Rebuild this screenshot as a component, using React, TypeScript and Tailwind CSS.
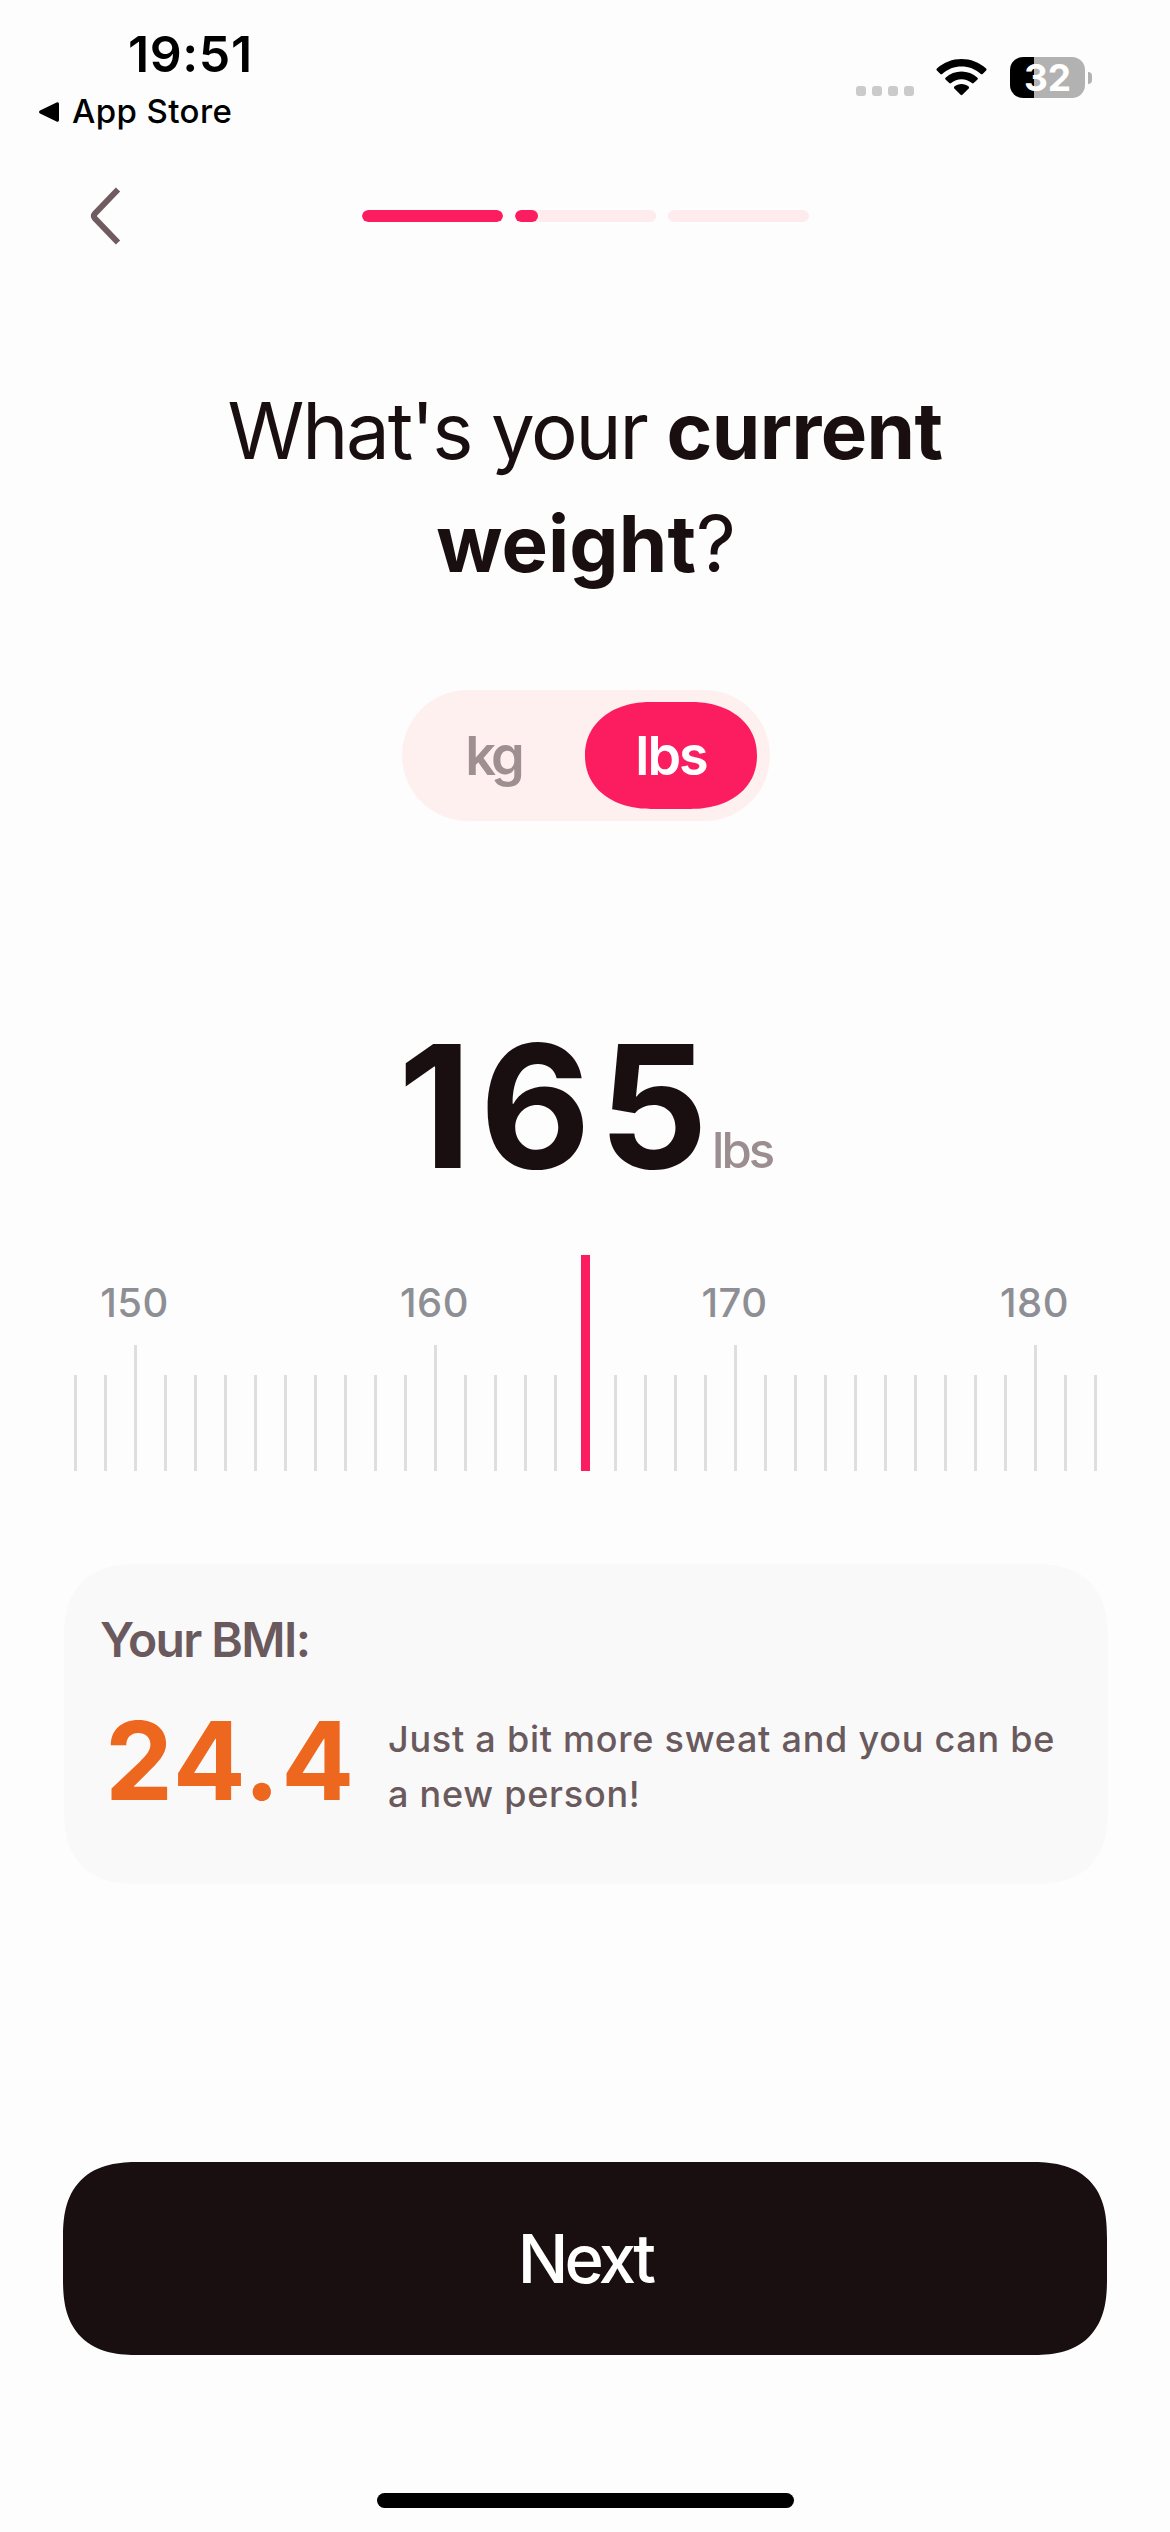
import { useState } from 'react'
import { clsx } from 'clsx'

const UNITS = ['kg', 'lbs'] as const
type Unit = (typeof UNITS)[number]

const RULER_START = 148
const RULER_END = 182
const RULER_VALUES = Array.from({ length: RULER_END - RULER_START + 1 }, (_, i) => RULER_START + i)

export default function App() {
  const [unit, setUnit] = useState<Unit>('lbs')
  const weight = 165

  return (
    <div className="flex h-[2532px] w-[1170px] flex-col overflow-hidden bg-[#fdfdfd] font-['Inter',sans-serif] text-[#190e10]">
      <StatusBar />
      <NavBar />

      <main className="flex flex-col">
        <h1 className="mt-[98px] text-center text-[78px] leading-[113px] font-normal tracking-[-2.2px]">
          What's your <b className="font-bold tracking-[-0.6px]">current</b>
          <br />
          <b className="font-bold tracking-[0.1px]">weight</b>?
        </h1>

        <UnitToggle value={unit} onChange={setUnit} />

        <div className="mt-[200px] ml-[398px] flex h-[170px] items-baseline">
          <span className="text-[171px] leading-[170px] font-bold tracking-[8px]">{weight}</span>
          <span className="ml-[-4px] text-[49px] font-medium tracking-[-3px] text-[#9b8d90]">{unit}</span>
        </div>

        <Ruler selected={weight} />
        <BmiCard bmi="24.4" message="Just a bit more sweat and you can be a new person!" />
      </main>

      <button
        type="button"
        className="mx-[63px] mt-[278px] h-[193px] rounded-[76px] bg-[#190e10] text-[67px] leading-[193px] font-medium tracking-[-3.8px] text-white [corner-shape:superellipse(1.35)]"
      >
        Next
      </button>

      <div className="mx-auto mt-[138px] h-[15px] w-[417px] rounded-full bg-black" />
    </div>
  )
}

function StatusBar() {
  return (
    <header className="flex h-[156px] justify-between text-black">
      <div className="pt-[24px] pl-[38px]">
        <div className="pl-[90px] text-[50px] leading-[60px] font-semibold tracking-[0.6px]">19:51</div>
        <div className="mt-[8px] flex h-[40px] items-center text-[33px] font-medium tracking-[0.4px]">
          <svg className="mr-[12px] h-[22px] w-[22px]" viewBox="0 0 22 22">
            <path d="M2 9.5 18.5 1.5Q21 .6 21 3v16q0 2.400-2.500 1.500L2 12.500Q0 11 2 9.500Z" />
          </svg>
          App Store
        </div>
      </div>

      <div className="flex pt-[57px] pr-[78px]">
        <div className="mt-[29px] flex gap-[6px]">
          {[0, 1, 2, 3].map((dot) => (
            <span key={dot} className="size-[10px] rounded-[3px] bg-[#cbcbcb]" />
          ))}
        </div>
        <svg className="mt-[1px] ml-[22px] h-[40px] w-[51px]" viewBox="0 0 51 40">
          <path d="M.9 10.600C14.500-2.200 36.500-2.200 50.100 10.600Q51 11.500 50.100 12.400L46.600 15.900Q45.700 16.700 44.800 15.900C34 6 17 6 6.200 15.900Q5.300 16.700 4.400 15.900L.9 12.400Q0 11.500.9 10.600Z" />
          <path d="M9.500 19.700C18.300 11.400 32.700 11.400 41.500 19.700Q42.300 20.600 41.500 21.400L37.700 25.100Q36.800 25.900 35.900 25.100C30 19.900 21 19.900 15.100 25.100Q14.200 25.900 13.300 25.100L9.500 21.400Q8.700 20.600 9.500 19.700Z" />
          <path d="M18.300 28.600C22.300 25 28.700 25 32.700 28.600Q33.500 29.500 32.700 30.400L26.400 36.800Q25.500 37.600 24.600 36.800L18.300 30.400Q17.500 29.500 18.300 28.600Z" />
        </svg>
        <div className="ml-[23px] flex h-[41px] w-[75px] items-center justify-center rounded-[13px] bg-[linear-gradient(90deg,#000_24px,#b2b2b2_24px)] text-[37px] font-bold text-white">
          32
        </div>
        <span className="mt-[15px] ml-[3px] h-[12px] w-[4px] rounded-r-full bg-[#b2b2b2]" />
      </div>
    </header>
  )
}

function NavBar() {
  return (
    <nav className="flex h-[120px] items-center">
      <button type="button" className="ml-[90px]">
        <svg className="h-[60px] w-[32px]" viewBox="0 0 32 60" fill="none" stroke="#6e5c60" strokeWidth="6">
          <path d="M28 3.500 5 27.500Q2.800 30 5 32.500L28 56.500" />
        </svg>
      </button>
      <div className="ml-[240px] flex gap-[12px]">
        <ProgressSegment fill={100} />
        <ProgressSegment fill={16.3} />
        <ProgressSegment fill={0} />
      </div>
    </nav>
  )
}

function ProgressSegment({ fill }: { fill: number }) {
  return (
    <div className="h-[12px] w-[141px] overflow-hidden rounded-full bg-[#feebee]">
      <div className="h-full rounded-full bg-[#fb1d60]" style={{ width: `${fill}%` }} />
    </div>
  )
}

function UnitToggle({ value, onChange }: { value: Unit; onChange: (unit: Unit) => void }) {
  return (
    <div className="mt-[90px] ml-[402px] flex h-[131px] w-[368px] items-center justify-between rounded-full bg-[#fff0f0] pr-[13px] pl-[11px]">
      {UNITS.map((unit) => (
        <button
          key={unit}
          type="button"
          onClick={() => onChange(unit)}
          className={clsx(
            'h-[107px] rounded-[66px/53px] text-[54px] leading-[107px] font-semibold [corner-shape:superellipse(1.1)]',
            unit === 'kg' ? 'w-[160px] tracking-[-4px]' : 'w-[172px] tracking-[-2px]',
            value === unit ? 'bg-[#fb1d60] text-white' : 'text-[#9f8f91]',
          )}
        >
          {unit}
        </button>
      ))}
    </div>
  )
}

function Ruler({ selected }: { selected: number }) {
  return (
    <div className="mt-[64px] ml-[74px] flex h-[216px] items-end gap-[27px]">
      {RULER_VALUES.map((value) => (
        <div key={value} className="flex w-[3px] flex-col items-center">
          {value % 10 === 0 && (
            <span className="mr-[2px] mb-[18px] text-[40px] leading-[49px] font-medium tracking-[0.5px] text-[#8e8f94]">
              {value}
            </span>
          )}
          <span
            className={clsx(
              'shrink-0',
              value === selected
                ? 'h-[216px] w-[9px] bg-[#fb1d60]'
                : value % 10 === 0
                  ? 'h-[126px] w-[3px] bg-[#dedede]'
                  : 'h-[96px] w-[3px] bg-[#dedede]',
            )}
          />
        </div>
      ))}
    </div>
  )
}

function BmiCard({ bmi, message }: { bmi: string; message: string }) {
  return (
    <section className="mt-[93px] mr-[62px] ml-[64px] h-[320px] rounded-[76px] bg-[#f9f9f9] pt-[46px] pl-[36px] text-[#6a5a5d] [corner-shape:superellipse(1.35)]">
      <h2 className="text-[48px] leading-[60px] font-semibold tracking-[-1.6px]">Your BMI:</h2>
      <div className="mt-[30px] flex items-center">
        <span className="w-[288px] pl-[5px] text-[108px] leading-[110px] font-bold tracking-[1.5px] text-[#ed671f]">
          {bmi}
        </span>
        <p className="w-[690px] pt-[12px] text-[36px] leading-[55px] font-medium tracking-[0.75px]">{message}</p>
      </div>
    </section>
  )
}
